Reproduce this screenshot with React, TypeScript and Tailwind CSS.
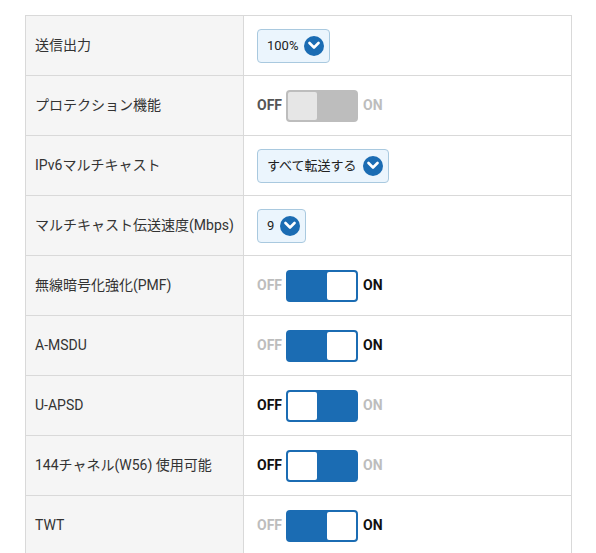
import React from "react";

const FONT = { fontFamily: 'Roboto, "Noto Sans CJK JP", "Noto Sans", sans-serif' };

function Chevron() {
  return (
    <span className="inline-flex h-[20px] w-[20px] items-center justify-center rounded-full bg-[#1b6cb3]">
      <svg width="12" height="9" viewBox="0 0 12 9">
        <path d="M1.5 2 L6 6.5 L10.5 2" stroke="#fff" strokeWidth="2.6" fill="none" strokeLinecap="round" strokeLinejoin="round" />
      </svg>
    </span>
  );
}

function Select({ text }: { text: string }) {
  return (
    <div className="inline-flex h-[34px] items-center gap-[6px] rounded-[4px] border border-[#a9c9df] bg-[#ebf5fd] pl-[9px] pr-[5px] text-[13px] text-[#222]">
      <span>{text}</span>
      <Chevron />
    </div>
  );
}

function Toggle({ on, disabled }: { on: boolean; disabled?: boolean }) {
  const offCls = disabled ? "text-[#555]" : on ? "text-[#bdbdbd]" : "text-[#111]";
  const onCls = disabled ? "text-[#bdbdbd]" : on ? "text-[#111]" : "text-[#bdbdbd]";
  const box = disabled ? "border-[#bdbdbd] bg-[#bdbdbd]" : "border-[#1b6cb3] bg-[#1b6cb3]";
  const knob = disabled ? "bg-[#e6e6e6]" : "bg-white";
  return (
    <div className="flex items-center text-[14px] font-bold">
      <span className={offCls}>OFF</span>
      <div className={`ml-[4px] flex h-[32px] w-[72px] rounded-[4px] border-2 ${box} ${on ? "justify-end" : "justify-start"}`}>
        <div className={`h-full w-[29px] rounded-[2px] ${knob}`} />
      </div>
      <span className={`ml-[5px] ${onCls}`}>ON</span>
    </div>
  );
}

type Row = { label: string; node: React.ReactNode };

const rows: Row[] = [
  { label: "送信出力", node: <Select text="100%" /> },
  { label: "プロテクション機能", node: <Toggle on={false} disabled /> },
  { label: "IPv6マルチキャスト", node: <Select text="すべて転送する" /> },
  { label: "マルチキャスト伝送速度(Mbps)", node: <Select text="9" /> },
  { label: "無線暗号化強化(PMF)", node: <Toggle on /> },
  { label: "A-MSDU", node: <Toggle on /> },
  { label: "U-APSD", node: <Toggle on={false} /> },
  { label: "144チャネル(W56) 使用可能", node: <Toggle on={false} /> },
  { label: "TWT", node: <Toggle on /> },
];

export default function App() {
  return (
    <div className="h-[553px] w-[596px] overflow-hidden bg-white pt-[15px]" style={FONT}>
      <div className="ml-[25px] w-[547px] border-l border-r border-t border-[#d9d9d9]">
        {rows.map((r, i) => (
          <div key={i} className="flex h-[60px] border-b border-[#d9d9d9]">
            <div className="flex w-[218px] items-center border-r border-[#d9d9d9] bg-[#f5f5f5] pl-[9px] text-[14px] text-[#333]">
              {r.label}
            </div>
            <div className="flex flex-1 items-center pl-[13px]">{r.node}</div>
          </div>
        ))}
      </div>
    </div>
  );
}
